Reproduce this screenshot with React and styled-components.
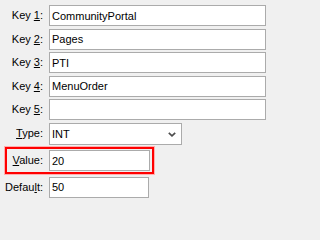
import styled, { createGlobalStyle } from "styled-components";

const Global = createGlobalStyle`
  html, body {
    margin: 0;
    padding: 0;
    background: #f0f0f0;
  }
  body {
    font-family: "Liberation Sans", Arial, sans-serif;
    font-size: 11px;
    color: #000;
  }
`;

const fields = [
  { label: "Key ", key: "1", rest: ":", value: "CommunityPortal" },
  { label: "Key ", key: "2", rest: ":", value: "Pages" },
  { label: "Key ", key: "3", rest: ":", value: "PTI" },
  { label: "Key ", key: "4", rest: ":", value: "MenuOrder" },
  { label: "Key ", key: "5", rest: ":", value: "" },
];

export default function App() {
  return (
    <>
      <Global />
      <Form>
        {fields.map((f) => (
          <Row key={f.key}>
            <Label>
              {f.label}
              <u>{f.key}</u>
              {f.rest}
            </Label>
            <Input value={f.value} readOnly />
          </Row>
        ))}
        <Row>
          <Label>
            <u>T</u>ype:
          </Label>
          <SelectBox>
            <span>INT</span>
            <svg width="8" height="5" viewBox="0 0 8 5">
              <path d="M0.8 0.8 L4 3.8 L7.2 0.8" fill="none" stroke="#4d4d4d" strokeWidth="1.7" />
            </svg>
          </SelectBox>
        </Row>
        <Highlight>
          <Label>
            <u>V</u>alue:
          </Label>
          <Input value="20" readOnly />
        </Highlight>
        <Row $narrow>
          <Label>
            Defau<u>l</u>t:
          </Label>
          <Input value="50" readOnly />
        </Row>
      </Form>
    </>
  );
}

const Form = styled.div`
  display: flex;
  flex-direction: column;
  gap: 2.5px;
  padding-top: 5px;
  width: 271px;
`;

const Row = styled.div`
  display: grid;
  grid-template-columns: 44px ${(p) => (p.$narrow ? "100px" : "217px")};
  column-gap: 5px;
  align-items: center;
`;

const Label = styled.label`
  text-align: right;
  white-space: nowrap;
  line-height: 13px;
  padding-right: 1px;
  u {
    text-underline-offset: 1px;
  }
`;

const Input = styled.input`
  box-sizing: border-box;
  height: 21px;
  width: 100%;
  margin: 0;
  padding: 0 2px;
  border: 1px solid #ababab;
  background: #fff;
  font-family: "Liberation Sans", Arial, sans-serif;
  font-size: 11px;
  color: #000;
  outline: none;
`;

const SelectBox = styled.div`
  box-sizing: border-box;
  width: 133px;
  height: 22px;
  border: 1px solid #ababab;
  background: #fff;
  display: flex;
  align-items: center;
  justify-content: space-between;
  padding: 0 5px 0 2px;
  svg {
    display: block;
    margin-top: 1px;
  }
`;

const Highlight = styled.div`
  box-sizing: border-box;
  margin-left: 5px;
  width: 149px;
  border: 2px solid #f00;
  box-shadow: 0 0 0 1px #ffb0b0;
  padding: 1px 2px 1px 0;
  display: grid;
  grid-template-columns: 37px 101px;
  column-gap: 5px;
  align-items: center;
`;
